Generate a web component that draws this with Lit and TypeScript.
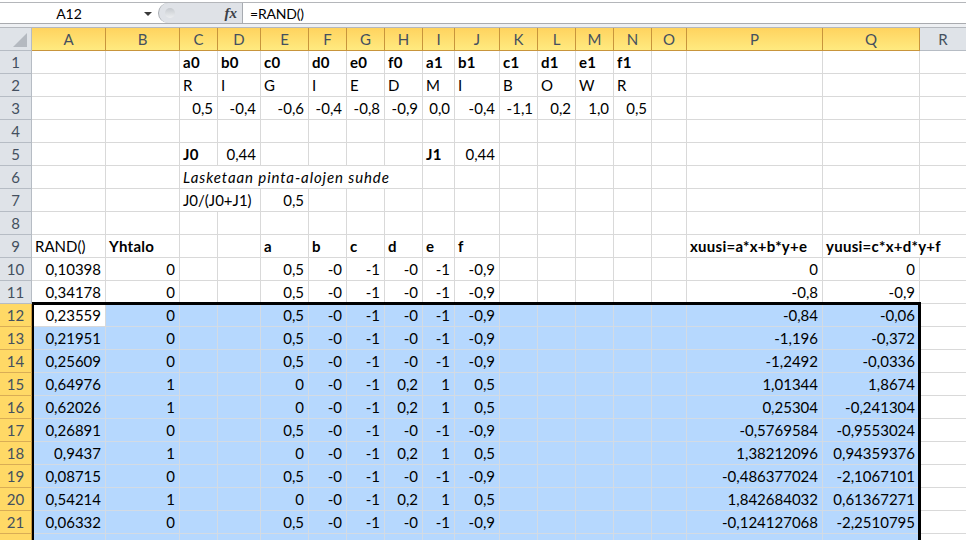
import { LitElement, html, css } from "lit";
import { customElement } from "lit/decorators.js";

const COLS = "ABCDEFGHIJKLMNOPQR".split("");
type Cell = { t: string; r?: boolean; b?: boolean; i?: boolean; span?: number };
type Row = Record<string, Cell>;

const fill = (start: number, vals: string[], o: Partial<Cell> = {}): Row => {
  const out: Row = {};
  vals.forEach((t, k) => {
    out[COLS[start + k]] = { t, ...o };
  });
  return out;
};

const mid0 = ["0,5", "-0", "-1", "-0", "-1", "-0,9"];
const mid1 = ["0", "-0", "-1", "0,2", "1", "0,5"];
const dataRow = (a: string, b: string, mid: string[], p: string, q: string): Row => ({
  A: { t: a, r: true },
  B: { t: b, r: true },
  ...fill(4, mid, { r: true }),
  P: { t: p, r: true },
  Q: { t: q, r: true },
});

const ROWS: Row[] = [
  fill(2, "a0 b0 c0 d0 e0 f0 a1 b1 c1 d1 e1 f1".split(" "), { b: true }),
  fill(2, "R I G I E D M I B O W R".split(" ")),
  fill(2, "0,5 -0,4 -0,6 -0,4 -0,8 -0,9 0,0 -0,4 -1,1 0,2 1,0 0,5".split(" "), { r: true }),
  {},
  {
    C: { t: "J0", b: true },
    D: { t: "0,44", r: true },
    I: { t: "J1", b: true },
    J: { t: "0,44", r: true },
  },
  { C: { t: "Lasketaan pinta-alojen suhde", i: true, span: 6 } },
  { C: { t: "J0/(J0+J1)", span: 2 }, E: { t: "0,5", r: true } },
  {},
  {
    A: { t: "RAND()" },
    B: { t: "Yhtalo", b: true },
    ...fill(4, ["a", "b", "c", "d", "e", "f"], { b: true }),
    P: { t: "xuusi=a*x+b*y+e", b: true },
    Q: { t: "yuusi=c*x+d*y+f", b: true, span: 2 },
  },
  dataRow("0,10398", "0", mid0, "0", "0"),
  dataRow("0,34178", "0", mid0, "-0,8", "-0,9"),
  dataRow("0,23559", "0", mid0, "-0,84", "-0,06"),
  dataRow("0,21951", "0", mid0, "-1,196", "-0,372"),
  dataRow("0,25609", "0", mid0, "-1,2492", "-0,0336"),
  dataRow("0,64976", "1", mid1, "1,01344", "1,8674"),
  dataRow("0,62026", "1", mid1, "0,25304", "-0,241304"),
  dataRow("0,26891", "0", mid0, "-0,5769584", "-0,9553024"),
  dataRow("0,9437", "1", mid1, "1,38212096", "0,94359376"),
  dataRow("0,08715", "0", mid0, "-0,486377024", "-2,1067101"),
  dataRow("0,54214", "1", mid1, "1,842684032", "0,61367271"),
  dataRow("0,06332", "0", mid0, "-0,124127068", "-2,2510795"),
  {},
];

@customElement("app-root")
export class AppRoot extends LitElement {
  static styles = css`
    :host {
      display: block;
      width: 966px;
      height: 540px;
      overflow: hidden;
      background: #fff;
      font-family: "Lato", "Liberation Sans", sans-serif;
      font-size: 15px;
      color: #000;
    }
    .fbar {
      display: flex;
      height: 20px;
      margin-top: 2px;
      border-top: 1px solid #b4b6ba;
      border-bottom: 1px solid #a9abaf;
      background: #fff;
      font-size: 14px;
    }
    .name {
      width: 158px;
      display: flex;
      align-items: center;
    }
    .name span {
      width: 138px;
      text-align: center;
    }
    .arrow {
      width: 0;
      height: 0;
      border-left: 4px solid transparent;
      border-right: 4px solid transparent;
      border-top: 4px solid #3a3a3a;
      margin-left: 6px;
      margin-top: 2px;
    }
    .pill {
      width: 85px;
      box-sizing: border-box;
      background: #dfe2e7;
      border-left: 1px solid #a7abb1;
      border-right: 1px solid #a7abb1;
      border-radius: 11px 0 0 11px;
      display: flex;
      align-items: center;
      justify-content: space-between;
      padding: 0 5px 0 6px;
    }
    .dot {
      width: 10px;
      height: 10px;
      border-radius: 50%;
      background: linear-gradient(#c6cacf, #eceef0);
    }
    .fx {
      font-family: "Liberation Serif", serif;
      font-style: italic;
      font-weight: bold;
      font-size: 15px;
      color: #3b3f46;
    }
    .input {
      padding-left: 7px;
      display: flex;
      align-items: center;
      letter-spacing: -0.2px;
    }
    .gap {
      height: 3px;
      background: #eef0f3;
    }
    .sheet {
      position: relative;
      display: grid;
      grid-template-columns: 32px 74px 74px 38px 43px 48px 38px 38px 38px 32px 45px 38px 38px 38px 38px 35px 136px 97px 47px;
      grid-auto-rows: 23px;
      border-top: 1px solid #b4b8be;
    }
    .corner {
      background: #dfe3e8;
      border-right: 1px solid #b6bcc4;
      border-bottom: 1px solid #b6bcc4;
      box-sizing: border-box;
    }
    .corner svg {
      display: block;
    }
    .ch,
    .rh {
      box-sizing: border-box;
      display: flex;
      align-items: center;
      justify-content: center;
      color: #44505f;
      font-size: 15px;
    }
    .ch {
      background: linear-gradient(#ffd35f, #ffea80);
      border-right: 1px solid #c8953c;
      border-bottom: 1px solid #c8953c;
    }
    .ch.off {
      background: #dfe3e8;
      border-right: 1px solid #b6bcc4;
      border-bottom: 1px solid #b6bcc4;
    }
    .rh {
      background: #dfe3e8;
      border-right: 1px solid #b6bcc4;
      border-bottom: 1px solid #b6bcc4;
    }
    .rh.on {
      background: #ffd966;
      border-right: 1px solid #c8953c;
      border-bottom: 1px solid #d9ad55;
    }
    .c {
      box-sizing: border-box;
      min-width: 0;
      white-space: nowrap;
      border-right: 1px solid #d9d9d9;
      border-bottom: 1px solid #d9d9d9;
      padding: 0 4px 0 3px;
      line-height: 22px;
    }
    .c.r {
      text-align: right;
    }
    .c.b {
      font-weight: bold;
      letter-spacing: 0.27px;
    }
    .c.i {
      font-style: italic;
      letter-spacing: 0.9px;
    }
    .c.s {
      background: #b6d8fe;
      border-color: #d3dbe4;
    }
    .sel {
      position: absolute;
      left: 32px;
      top: 274px;
      width: 889px;
      height: 300px;
      box-sizing: border-box;
      border: 3px solid #000;
      border-left-width: 2px;
      pointer-events: none;
    }
  `;

  render() {
    return html`
      <div class="fbar">
        <div class="name"><span>A12</span><i class="arrow"></i></div>
        <div class="pill">
          <i class="dot"></i>
          <span class="fx">fx</span>
        </div>
        <div class="input">=RAND()</div>
      </div>
      <div class="gap"></div>
      <div class="sheet">
        <div class="corner">
          <svg width="31" height="22" viewBox="0 0 31 22"><polygon points="27,5 27,19 13,19" fill="#b4b9c0" /></svg>
        </div>
        ${COLS.map((c) => html`<div class="ch ${c === "R" ? "off" : ""}">${c}</div>`)}
        ${ROWS.map((row, idx) => this.renderRow(row, idx + 1))}
        <div class="sel"></div>
      </div>
    `;
  }

  renderRow(row: Row, n: number) {
    const selected = n >= 12;
    const cells = [];
    let skip = 0;
    for (const col of COLS) {
      if (skip > 0) {
        skip--;
        continue;
      }
      const cell = row[col];
      const span = cell?.span ?? 1;
      skip = span - 1;
      const cls = [
        "c",
        cell?.r ? "r" : "",
        cell?.b ? "b" : "",
        cell?.i ? "i" : "",
        selected && col !== "R" && !(n === 12 && col === "A") ? "s" : "",
      ].join(" ");
      cells.push(
        html`<div class=${cls} style=${span > 1 ? `grid-column: span ${span}` : ""}>${cell?.t ?? ""}</div>`
      );
    }
    return html`<div class="rh ${selected ? "on" : ""}">${n <= 21 ? n : ""}</div>${cells}`;
  }
}
